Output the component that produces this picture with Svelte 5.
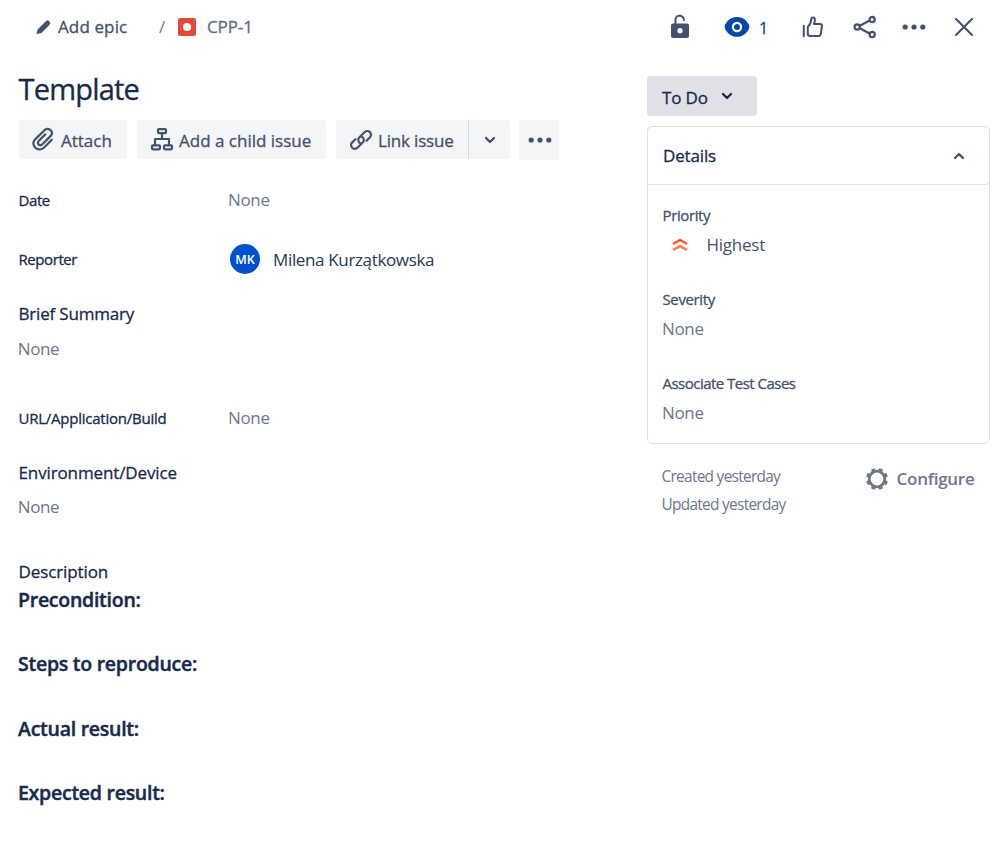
<script>
  const sections = [
    'Precondition:',
    'Steps to reproduce:',
    'Actual result:',
    'Expected result:'
  ];
  const teeth = [22.5, 67.5, 112.5, 157.5, 202.5, 247.5, 292.5, 337.5];
</script>

{#snippet chevron(up)}
  <svg class="chev" width="12" height="8" viewBox="0 0 12 8"><path d={up ? 'M2 6 6 2 10 6' : 'M2 2 6 6 10 2'} /></svg>
{/snippet}

{#snippet dots()}
  <svg class="dots" width="24" height="6" viewBox="0 0 24 6"><circle cx="3.2" cy="3" r="2.6" /><circle cx="12" cy="3" r="2.6" /><circle cx="20.8" cy="3" r="2.6" /></svg>
{/snippet}

<div class="page">
  <header>
    <nav>
      <svg class="pencil" width="15" height="15" viewBox="0 0 15 15"><path d="M1.8 9.3 8.7 2.4 12.4 6.1 5.5 13 .9 14Q.5 14 .6 13.5Z" /><path d="M8 3 10.6.7Q11.6 0 12.7.8L13.8 1.9Q14.7 3 13.9 4L12 6.5Z" /></svg>
      <span class="epic">Add epic</span>
      <span class="slash">/</span>
      <svg class="bug" width="18" height="18" viewBox="0 0 18 18"><rect width="18" height="18" rx="2" fill="#e5493a" /><circle cx="9" cy="9" r="4" fill="#fff" /></svg>
      <span class="key">CPP-1</span>
    </nav>
    <div class="tools">
      <svg class="lock" width="20" height="26" viewBox="0 0 20 26"><path d="M5.4 11V6.2a4.3 4.3 0 0 1 8.5-1.1v1.6" fill="none" stroke="#42526e" stroke-width="2" /><path fill-rule="evenodd" d="M3 9.5h14a2 2 0 0 1 2 2V22a2 2 0 0 1-2 2H3a2 2 0 0 1-2-2V11.5a2 2 0 0 1 2-2Zm7 4.6a2.6 2.6 0 1 0 0 5.2 2.6 2.6 0 0 0 0-5.2Z" fill="#42526e" /></svg>
      <svg class="eye" width="26" height="22" viewBox="0 0 26 22"><path d="M13 1C6.5 1 2.8 5 .9 9.2Q.3 11 .9 12.2C2.8 16.8 6.8 20.8 13 20.8S23.2 16.8 25.1 12.2Q25.7 11 25.1 9.2C23.2 5 19.5 1 13 1Z" fill="#0747a6" /><circle cx="13" cy="11" r="4.1" fill="#0747a6" stroke="#fff" stroke-width="2.2" /></svg>
      <span class="count">1</span>
      <svg class="thumb" width="22" height="22" viewBox="0 0 22 22"><path d="M1.8 9.8v10.5M5.8 10.9Q8.8 8.2 9.3 3.3C9.5.7 12.9.9 12.9 3.7Q12.9 6 11.9 7.9h6q2.3 0 2 2.2l-1.1 7.8q-.4 2.2-2.4 2.2H8.2q-2.4 0-2.4-2.3Z" /></svg>
      <svg class="share" width="24" height="24" viewBox="0 0 24 24"><path d="M6.8 10.7 16.7 5.5M6.8 13.3 16.7 18.5" /><circle cx="4.2" cy="12" r="2.6" /><circle cx="19.2" cy="4.5" r="2.6" /><circle cx="19.2" cy="19.5" r="2.6" /></svg>
      <span class="more">{@render dots()}</span>
      <svg class="close" width="20" height="20" viewBox="0 0 20 20"><path d="M2 2 18 18M18 2 2 18" /></svg>
    </div>
  </header>

  <div class="columns">
    <main>
      <h1>Template</h1>
      <div class="actions">
        <button class="attach">
          <svg width="24" height="24" viewBox="0 0 24 24"><path d="M20.8 11.8 13.4 19.2C10.8 21.8 7.2 22.2 4.5 19.9 1.6 17.2 1.7 13.9 4.4 11.1L13.2 2.5C15.1.6 17.9.4 19.7 2.2 21.5 4 21.2 6.4 19.5 8.1L11.4 16.2C10.2 17.4 8.6 17.4 7.6 16.4 6.5 15.3 6.8 13.8 7.9 12.7L14.3 6.4" /></svg>
          <span>Attach</span>
        </button>
        <button class="child">
          <svg width="24" height="24" viewBox="0 0 24 24"><path d="M12 5.5v5.5M5 16.5V11h14v5.5" /><rect x="8" y="1.2" width="8" height="4" rx="1" /><rect x="2" y="17.3" width="8" height="4" rx="1" /><rect x="14" y="17.3" width="8" height="4" rx="1" /></svg>
          <span>Add a child issue</span>
        </button>
        <div class="split">
          <button class="link">
            <svg width="24" height="24" viewBox="0 0 24 24"><path d="M12.9 15.5C10.8 15.6 8.9 13.8 9.3 11.4 9.4 10.6 9.9 9.9 10.5 9.3L15.3 4.5C16.9 2.9 19.3 2.7 20.8 4.1 22.4 5.6 22.3 8 20.8 9.5L17.5 12.8M11.1 8.5C13.4 8.3 15 10.2 14.8 12.3 14.7 13.3 14.3 14 13.5 14.7L8.7 19.5C7.1 21.1 4.8 21.2 3.2 19.7 1.7 18.2 1.7 15.9 3.2 14.4L6.5 11.2" /></svg>
            <span>Link issue</span>
          </button>
          <button class="drop">{@render chevron(false)}</button>
        </div>
        <button class="extra">{@render dots()}</button>
      </div>

      <div class="row"><span class="label date">Date</span><span class="none">None</span></div>
      <div class="row"><span class="label reporter">Reporter</span><span class="avatar">MK</span><span class="person">Milena Kurzątkowska</span></div>
      <div class="block"><span class="head brief">Brief Summary</span><span class="none">None</span></div>
      <div class="row"><span class="label app">URL/Application/Build</span><span class="none">None</span></div>
      <div class="block"><span class="head envname">Environment/Device</span><span class="none">None</span></div>
      <span class="head desc">Description</span>
      <div class="sections">
        {#each sections as title}<h2>{title}</h2>{/each}
      </div>
    </main>

    <aside>
      <button class="status"><span>To Do</span>{@render chevron(false)}</button>
      <section class="panel">
        <div class="panelhead"><span>Details</span>{@render chevron(true)}</div>
        <div class="field"><span class="flabel prio">Priority</span>
          <div class="prioval"><svg width="16" height="14" viewBox="0 0 16 14"><path d="M1 6 8 2 15 6" stroke="#ff5630" /><path d="M1 12 8 8 15 12" stroke="#ff7452" /></svg><span>Highest</span></div></div>
        <div class="field"><span class="flabel sev">Severity</span><span class="none">None</span></div>
        <div class="field"><span class="flabel assoc">Associate Test Cases</span><span class="none">None</span></div>
      </section>
      <footer>
        <div class="times"><span>Created yesterday</span><span>Updated yesterday</span></div>
        <div class="config">
          <svg width="24" height="24" viewBox="-12 -12 24 24"><circle r="7.8" fill="none" stroke="#6b778c" stroke-width="2.8" />{#each teeth as a}<rect x="-2.1" y="-11" width="4.2" height="4" rx="1" fill="#6b778c" transform="rotate({a})" />{/each}</svg>
          <span>Configure</span>
        </div>
      </footer>
    </aside>
  </div>
</div>

<style>
  :global(body) { background: #fff; }
  .page { width: 994px; height: 853px; overflow: hidden; font-family: "Open Sans", "Noto Sans", sans-serif; font-size: 17px; color: #172b4d; white-space: nowrap; }
  svg { display: block; flex: none; overflow: visible; }
  button { font: inherit; color: inherit; border: 0; padding: 0; margin: 0; display: flex; align-items: center; box-sizing: border-box; white-space: nowrap; }
  .epic, .key, .count, .actions span, .label, .head, .status span, .panelhead span, .flabel, h1 { -webkit-text-stroke: 0.3px currentColor; }
  header { height: 54px; display: flex; align-items: center; justify-content: space-between; }
  nav, .tools { display: flex; align-items: center; }
  nav { padding-left: 36px; line-height: 24px; }
  .pencil { fill: #42526e; }
  .epic { color: #42526e; margin-left: 7px; width: 101px; letter-spacing: 0.12px; }
  .slash { width: 19px; color: #6b778c; }
  .key { margin-left: 11px; color: #5e6c84; letter-spacing: -0.1px; }
  .chev { fill: none; stroke: currentColor; stroke-width: 2.3; stroke-linecap: round; stroke-linejoin: round; }
  .dots { fill: #42526e; }
  .tools { padding-right: 20px; color: #42526e; }
  .eye { margin-left: 34px; }
  .count { margin-left: 9px; width: 11px; color: #0747a6; font-size: 16px; padding-top: 2px; }
  .thumb { margin-left: 32px; fill: none; stroke: #42526e; stroke-width: 2; stroke-linejoin: round; stroke-linecap: round; }
  .share { margin-left: 29px; fill: none; stroke: #42526e; stroke-width: 2.2; }
  .more { margin-left: 25px; }
  .close { margin-left: 28px; fill: none; stroke: #42526e; stroke-width: 2.1; stroke-linecap: round; }
  .columns { display: flex; }
  main { width: 628.5px; padding-left: 18.5px; display: flex; flex-direction: column; }
  h1 { margin: 15px 0 11px; font-size: 29px; line-height: 40px; font-weight: 400; letter-spacing: -0.8px; }
  .actions { display: flex; height: 40px; margin-bottom: 10px; }
  .actions button { height: 39px; background: #f4f5f7; border-radius: 3px; color: #42526e; }
  .actions button span { padding-top: 1px; }
  .actions button > svg:not(.chev):not(.dots) { fill: none; stroke: #42526e; stroke-width: 2.2; stroke-linecap: round; stroke-linejoin: round; }
  .actions .attach { width: 108.5px; margin: 0 10px 0 0; padding-left: 12.5px; gap: 6px; }
  .actions .child { width: 189px; margin-right: 10px; padding-left: 13px; gap: 5px; }
  .split { display: flex; margin-right: 9px; }
  .actions .link { width: 133px; padding-left: 12.5px; gap: 5.5px; border-radius: 3px 0 0 3px; border-right: 1px solid #d3d7de; letter-spacing: -0.18px; }
  .actions .drop { width: 41px; justify-content: center; border-radius: 0 3px 3px 0; }
  .actions .extra { width: 40px; height: 40px; justify-content: center; padding-left: 1px; }
  .row { height: 59.5px; display: flex; align-items: center; }
  .label { width: 209.5px; font-size: 15px; }
  .date { letter-spacing: -0.42px; }
  .reporter { letter-spacing: -0.42px; }
  .app { letter-spacing: -0.24px; }
  .none { color: #6b778c; letter-spacing: -0.35px; }
  .block .none { margin-left: -0.8px; }
  .field .none { margin-left: -0.5px; }
  .person { letter-spacing: -0.35px; color: #253858; }
  .avatar { width: 30px; height: 30px; border-radius: 50%; background: #0052cc; color: #fff; font-size: 12.5px; font-weight: 600; display: flex; align-items: center; justify-content: center; margin: 0 13px 0 2px; }
  .block { height: 99px; padding-top: 8px; box-sizing: border-box; display: flex; flex-direction: column; line-height: 34.5px; }
  .brief { letter-spacing: -0.18px; }
  .envname { letter-spacing: -0.12px; }
  .desc { line-height: 34px; margin-top: 8px; letter-spacing: -0.1px; }
  .sections { display: flex; flex-direction: column; gap: 40.35px; }
  h2 { margin: 0 0 0 -0.5px; font-size: 19.5px; line-height: 24px; font-weight: 600; letter-spacing: -0.26px; -webkit-text-stroke: 0.45px currentColor; }
  h2:first-child { margin-top: -0.5px; }
  aside { width: 342.5px; padding: 22px 0 0 0; display: flex; flex-direction: column; }
  .status { width: 110px; height: 40px; background: #dfe1e6; border-radius: 3px; padding-left: 15px; gap: 13px; letter-spacing: -0.15px; }
  .status span { padding-top: 2px; }
  .panel { margin-top: 10px; height: 317.5px; border: 1px solid #dfe1e6; border-radius: 5px; box-sizing: border-box; }
  .panelhead { height: 59px; margin: -1px; box-sizing: border-box; border: 1px solid #dfe1e6; border-radius: 5px 5px 5px 0; display: flex; align-items: center; justify-content: space-between; padding: 0 24px 0 15px; letter-spacing: -0.15px; }
  .panelhead .chev { color: #42526e; }
  .field { height: 84.2px; padding: 17px 0 0 14.5px; box-sizing: border-box; display: flex; flex-direction: column; line-height: 29px; }
  .flabel { font-size: 15px; color: #42526e; }
  .prio, .sev { letter-spacing: -0.38px; }
  .assoc { letter-spacing: -0.52px; }
  .prioval { display: flex; align-items: center; padding-left: 9px; gap: 19px; color: #42526e; letter-spacing: -0.25px; }
  .prioval svg { fill: none; stroke-width: 2.4; }
  footer { display: flex; justify-content: space-between; padding: 17.5px 15px 0 14.5px; }
  .times { padding-top: 1.5px; display: flex; flex-direction: column; line-height: 28px; color: #6b778c; font-size: 15.4px; letter-spacing: -0.7px; }
  .config { height: 35px; display: flex; align-items: center; gap: 8px; color: #6b778c; font-weight: 600; letter-spacing: -0.25px; }
</style>
